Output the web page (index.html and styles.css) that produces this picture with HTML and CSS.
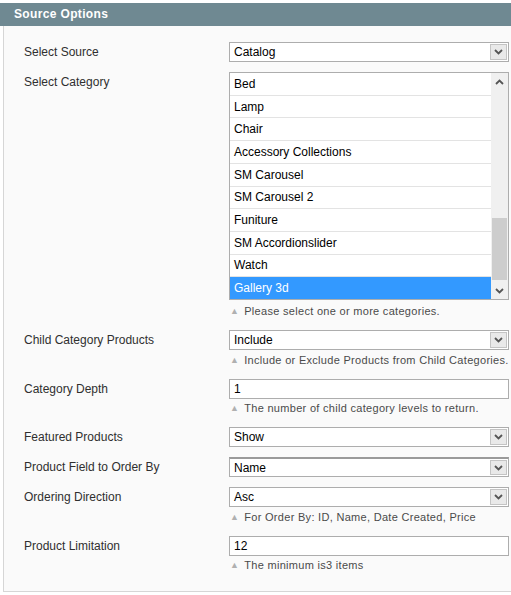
FILE: index.html
```html
<!DOCTYPE html>
<html>
<head>
<meta charset="utf-8">
<link rel="stylesheet" href="styles.css">
</head>
<body>
<div class="head">Source Options</div>
<div class="panel">
  <div class="row">
    <div class="label">Select Source</div>
    <div class="field">
      <div class="select"><span class="val">Catalog</span><span class="btn"><svg width="9" height="6" viewBox="0 0 9 6"><path d="M1 1 L4.5 4.5 L8 1" fill="none" stroke="#555" stroke-width="1.8"/></svg></span></div>
    </div>
  </div>
  <div class="row">
    <div class="label">Select Category</div>
    <div class="field">
      <div class="list">
        <div class="items">
          <div class="item">Bed</div>
          <div class="item">Lamp</div>
          <div class="item">Chair</div>
          <div class="item">Accessory Collections</div>
          <div class="item">SM Carousel</div>
          <div class="item">SM Carousel 2</div>
          <div class="item">Funiture</div>
          <div class="item">SM Accordionslider</div>
          <div class="item">Watch</div>
          <div class="item sel">Gallery 3d</div>
        </div>
        <div class="sbar">
          <div class="arr"><svg width="9" height="6" viewBox="0 0 9 6"><path d="M1 5 L4.5 1.5 L8 5" fill="none" stroke="#555" stroke-width="1.8"/></svg></div>
          <div class="track"><div class="thumb"></div></div>
          <div class="arr"><svg width="9" height="6" viewBox="0 0 9 6"><path d="M1 1 L4.5 4.5 L8 1" fill="none" stroke="#555" stroke-width="1.8"/></svg></div>
        </div>
      </div>
      <div class="hint first"><span class="tri">▲</span>Please select one or more categories.</div>
    </div>
  </div>
  <div class="row">
    <div class="label">Child Category Products</div>
    <div class="field">
      <div class="select"><span class="val">Include</span><span class="btn"><svg width="9" height="6" viewBox="0 0 9 6"><path d="M1 1 L4.5 4.5 L8 1" fill="none" stroke="#555" stroke-width="1.8"/></svg></span></div>
      <div class="hint"><span class="tri">▲</span>Include or Exclude Products from Child Categories.</div>
    </div>
  </div>
  <div class="row">
    <div class="label">Category Depth</div>
    <div class="field">
      <div class="input">1</div>
      <div class="hint"><span class="tri">▲</span>The number of child category levels to return.</div>
    </div>
  </div>
  <div class="row">
    <div class="label">Featured Products</div>
    <div class="field">
      <div class="select"><span class="val">Show</span><span class="btn"><svg width="9" height="6" viewBox="0 0 9 6"><path d="M1 1 L4.5 4.5 L8 1" fill="none" stroke="#555" stroke-width="1.8"/></svg></span></div>
    </div>
  </div>
  <div class="row">
    <div class="label">Product Field to Order By</div>
    <div class="field">
      <div class="select dark"><span class="val">Name</span><span class="btn"><svg width="9" height="6" viewBox="0 0 9 6"><path d="M1 1 L4.5 4.5 L8 1" fill="none" stroke="#555" stroke-width="1.8"/></svg></span></div>
    </div>
  </div>
  <div class="row">
    <div class="label">Ordering Direction</div>
    <div class="field">
      <div class="select"><span class="val">Asc</span><span class="btn"><svg width="9" height="6" viewBox="0 0 9 6"><path d="M1 1 L4.5 4.5 L8 1" fill="none" stroke="#555" stroke-width="1.8"/></svg></span></div>
      <div class="hint"><span class="tri">▲</span>For Order By: ID, Name, Date Created, Price</div>
    </div>
  </div>
  <div class="row">
    <div class="label">Product Limitation</div>
    <div class="field">
      <div class="input">12</div>
      <div class="hint"><span class="tri">▲</span>The minimum is3 items</div>
    </div>
  </div>
</div>
</body>
</html>
```
FILE: styles.css
```css
html, body {
  margin: 0;
  padding: 0;
  background: #fff;
  font-family: "Liberation Sans", Arial, sans-serif;
  font-size: 12px;
  color: #2f2f2f;
}
body {
  padding-top: 3px;
  width: 511px;
  overflow: hidden;
}
.head {
  background: #6f8992;
  color: #fff;
  font-weight: bold;
  font-size: 12px;
  letter-spacing: 0.35px;
  height: 23px;
  line-height: 23px;
  padding-left: 14px;
}
.panel {
  margin-left: 3px;
  border-left: 1px solid #d6d6d6;
  border-bottom: 1px solid #d6d6d6;
  background: #fafafa;
  padding: 11px 0 12px 20px;
}
.row {
  display: grid;
  grid-template-columns: 205px 280px;
  padding: 5px 0;
}
.label {
  line-height: 20px;
}
.select, .input {
  height: 20px;
  box-sizing: border-box;
  border: 1px solid #adadad;
  background: #fff;
  color: #000;
  display: flex;
  align-items: center;
  padding-left: 4px;
}
.select.dark {
  border-top: 2px solid #9a9a9a;
}
.val {
  flex: 1;
}
.btn {
  width: 17px;
  align-self: stretch;
  margin: 1px 1px 1px 0;
  background: #e9e9e9;
  border: 1px solid #c4c4c4;
  box-sizing: border-box;
  display: flex;
  align-items: center;
  justify-content: center;
}
.list {
  height: 228px;
  box-sizing: border-box;
  border: 1px solid #adadad;
  background: #fff;
  display: flex;
}
.items {
  flex: 1;
  display: flex;
  flex-direction: column;
}
.item {
  flex: 1;
  border-bottom: 1px solid #e3e3e3;
  padding-left: 4px;
  display: flex;
  align-items: center;
  color: #000;
}
.item.sel {
  background: #3399ff;
  color: #fff;
  border-bottom: none;
}
.sbar {
  width: 17px;
  background: #f0f0f0;
  display: flex;
  flex-direction: column;
}
.arr {
  height: 17px;
  display: flex;
  align-items: center;
  justify-content: center;
}
.track {
  flex: 1;
  display: flex;
  flex-direction: column;
  justify-content: flex-end;
}
.thumb {
  height: 62px;
  margin: 0 1px 2px 1px;
  background: #cdcdcd;
}
.hint {
  font-size: 11px;
  letter-spacing: 0.3px;
  color: #4a4a4a;
  padding-top: 1.5px;
  line-height: 17px;
  padding-left: 1px;
}
.hint.first {
  padding-top: 3px;
}
.tri {
  font-size: 9px;
  color: #b0b0b0;
  margin-right: 5px;
  vertical-align: 1px;
}
```
